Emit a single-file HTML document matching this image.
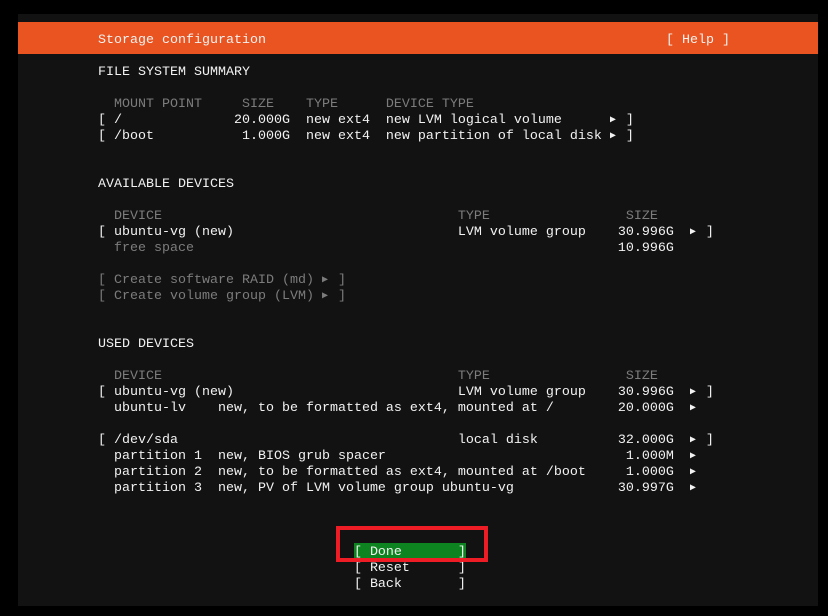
<!DOCTYPE html>
<html><head><meta charset="utf-8"><style>
html,body{margin:0;padding:0;background:#000;width:828px;height:616px;overflow:hidden}
#scr{position:absolute;left:18px;top:14px;width:800px;height:592px;background:#121212}
#bar{position:absolute;left:18px;top:22px;width:800px;height:32px;background:#e95420}
pre{margin:0;position:absolute;font-family:"Liberation Mono",monospace;font-size:13.33px;line-height:16px;color:#f2f2f2;white-space:pre}
.g{color:#7c7c7c}
.a{display:inline-block;width:8px;height:16px;line-height:16px;vertical-align:top;font-size:10px;text-align:left;overflow:hidden}
#done{position:absolute;left:354px;top:543px;width:112px;height:16px;background:#0e8420}
#red{position:absolute;left:336px;top:526px;width:144px;height:28px;border:4px solid #ee1c25}
</style></head><body>
<div id="scr"></div>
<div id="bar"></div>
<pre style="left:98px;top:33px">Storage configuration</pre>
<pre style="left:666px;top:33px">[ Help ]</pre>
<div id="done"></div>
<pre style="left:98px;top:65px">FILE SYSTEM SUMMARY

<span class="g">  MOUNT POINT     SIZE    TYPE      DEVICE TYPE</span>
[ /              20.000G  new ext4  new LVM logical volume      <span class="a">▶</span> ]
[ /boot           1.000G  new ext4  new partition of local disk <span class="a">▶</span> ]


AVAILABLE DEVICES

<span class="g">  DEVICE                                     TYPE                 SIZE</span>
[ ubuntu-vg (new)                            LVM volume group    30.996G  <span class="a">▶</span> ]
<span class="g">  free space</span>                                                     10.996G

<span class="g">[ Create software RAID (md) <span class="a">▶</span> ]</span>
<span class="g">[ Create volume group (LVM) <span class="a">▶</span> ]</span>


USED DEVICES

<span class="g">  DEVICE                                     TYPE                 SIZE</span>
[ ubuntu-vg (new)                            LVM volume group    30.996G  <span class="a">▶</span> ]
  ubuntu-lv    new, to be formatted as ext4, mounted at /        20.000G  <span class="a">▶</span>

[ /dev/sda                                   local disk          32.000G  <span class="a">▶</span> ]
  partition 1  new, BIOS grub spacer                              1.000M  <span class="a">▶</span>
  partition 2  new, to be formatted as ext4, mounted at /boot     1.000G  <span class="a">▶</span>
  partition 3  new, PV of LVM volume group ubuntu-vg             30.997G  <span class="a">▶</span>



                                [ Done       ]
                                [ Reset      ]
                                [ Back       ]</pre>
<div id="red"></div>
</body></html>
